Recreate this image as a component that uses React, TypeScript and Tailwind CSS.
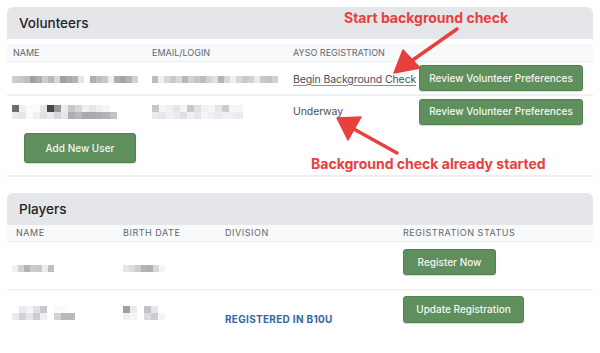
import React from "react";

const shade = (v: number) => `rgb(${v},${v},${v + 4})`;

function Pix({ rows, cell = 7, h = 7 }: { rows: number[][]; cell?: number; h?: number }) {
  return (
    <div className="flex flex-col">
      {rows.map((r, i) => (
        <div key={i} className="flex">
          {r.map((v, j) => (
            <div key={j} style={{ width: cell, height: h, background: v >= 255 ? "transparent" : shade(v) }} />
          ))}
        </div>
      ))}
    </div>
  );
}

function Btn({ children, w }: { children: React.ReactNode; w: string }) {
  return (
    <div
      className={`${w} flex items-center justify-center whitespace-nowrap rounded-[3px] bg-[#5f8f5c] border border-[#55834f] text-[10px] font-medium text-[#f3f7f2] shadow-[0_1px_1px_rgba(0,0,0,0.15)]`}
    >
      {children}
    </div>
  );
}

export default function App() {
  return (
    <div className="relative w-[600px] h-[353px] overflow-hidden bg-white font-['Inter',sans-serif] text-[#2b2f36]">
      <div className="pl-[7px] pr-[7px] pt-[7px]">
        {/* Volunteers */}
        <div className="h-[32px] bg-[#e5e6ea] rounded-t-[6px] flex items-center pl-[12px] text-[13.5px] font-medium text-[#1f2226]">
          Volunteers
        </div>
        <div className="h-[5px]" />
        <div className="h-[18px] bg-[#f8f9fb] flex items-center text-[9px] text-[#5f6670] border-b border-[#eceef2] whitespace-nowrap">
          <div className="w-[145px] pl-[6px]">NAME</div>
          <div className="w-[141px]">EMAIL/LOGIN</div>
          <div className="w-[126px]">AYSO REGISTRATION</div>
        </div>
        <div className="h-[34px] flex items-center border-b-2 border-[#f0f1f4]">
          <div className="w-[145px] pl-[5px] pt-[2px]">
            <Pix cell={6} rows={[[205, 200, 190, 160, 175, 205, 185, 215, 160, 170, 180, 230, 255, 175, 190, 200, 240, 175, 165, 180, 210]]} />
          </div>
          <div className="w-[141px] pt-[2px]">
            <Pix cell={6} rows={[[190, 240, 215, 200, 215, 185, 210, 200, 190, 210, 225, 180, 215, 240, 215, 200, 210, 235, 200, 195, 210]]} />
          </div>
          <div className="w-[126px] pt-[3px] whitespace-nowrap text-[10.5px] tracking-[-0.01em] text-[#4a4f57] underline underline-offset-2 decoration-[#8a8f97]">
            Begin Background Check
          </div>
          <Btn w="w-[164px] h-[26px]">Review Volunteer Preferences</Btn>
        </div>
        <div className="h-[31px] flex items-center">
          <div className="w-[145px] pl-[5px]">
            <Pix
              cell={7}
              h={7}
              rows={[
                [110, 240, 250, 250, 230, 70, 150, 235, 200, 215, 240, 230, 240, 245, 255, 255, 255, 255],
                [235, 230, 250, 240, 225, 235, 215, 230, 175, 185, 170, 170, 175, 180, 195, 255, 255, 255],
              ]}
            />
          </div>
          <div className="w-[141px]">
            <Pix
              cell={7}
              h={7}
              rows={[
                [200, 245, 240, 230, 245, 200, 225, 240, 245, 230, 205, 245, 245, 255, 255, 255],
                [235, 230, 240, 235, 225, 240, 230, 245, 240, 235, 240, 240, 235, 255, 255, 255],
              ]}
            />
          </div>
          <div className="w-[126px] text-[10.5px] tracking-[-0.01em] text-[#4a4f57]">Underway</div>
          <Btn w="w-[164px] h-[26px]">Review Volunteer Preferences</Btn>
        </div>
        <div className="pl-[17px] pt-[6px] pb-[12px] border-b-2 border-[#eceef1]">
          <Btn w="w-[112px] h-[30px]">Add New User</Btn>
        </div>

        {/* Players */}
        <div className="mt-[16px] h-[32px] bg-[#e5e6ea] rounded-t-[6px] flex items-center pl-[12px] text-[13.5px] font-medium text-[#1f2226]">
          Players
        </div>
        <div className="h-[17px] bg-[#f8f9fb] flex items-center text-[9px] tracking-[0.06em] text-[#5f6670] border-b border-[#eceef2] whitespace-nowrap">
          <div className="w-[116px] pl-[9px]">NAME</div>
          <div className="w-[102px]">BIRTH DATE</div>
          <div className="w-[178px]">DIVISION</div>
          <div>REGISTRATION STATUS</div>
        </div>
        <div className="h-[49px] flex items-start border-b-2 border-[#f0f1f4]">
          <div className="w-[116px] pl-[5px] pt-[23px]">
            <Pix cell={6} h={7} rows={[[240, 210, 180, 205, 200, 235, 190, 255]]} />
          </div>
          <div className="w-[102px] pt-[23px]">
            <Pix cell={6} h={7} rows={[[230, 220, 205, 180, 175, 215, 245]]} />
          </div>
          <div className="w-[178px]" />
          <div className="pt-[7px]">
            <Btn w="w-[93px] h-[26px]">Register Now</Btn>
          </div>
        </div>
        <div className="h-[50px] flex items-start">
          <div className="w-[116px] pl-[5px] pt-[15px]">
            <Pix
              cell={7}
              h={7}
              rows={[
                [255, 235, 245, 225, 200, 255, 250, 250, 255],
                [235, 210, 230, 205, 240, 255, 210, 185, 185],
              ]}
            />
          </div>
          <div className="w-[102px] pt-[15px]">
            <Pix
              cell={7}
              h={7}
              rows={[
                [160, 235, 255, 195, 230, 255],
                [240, 245, 255, 220, 205, 245],
              ]}
            />
          </div>
          <div className="w-[178px] pt-[21px] whitespace-nowrap text-[10px] font-bold tracking-[0.03em] text-[#3566a1]">REGISTERED IN B10U</div>
          <div className="pt-[5px]">
            <Btn w="w-[121px] h-[27px]">Update Registration</Btn>
          </div>
        </div>
      </div>

      {/* Annotations */}
      <div className="absolute left-[344px] top-[8px] whitespace-nowrap text-[14px] font-bold text-[#e8403d] leading-[20px]">
        Start background check
      </div>
      <div className="absolute left-[311px] top-[154px] whitespace-nowrap text-[14px] font-bold text-[#e8403d] leading-[20px]">
        Background check already started
      </div>
      <svg className="absolute left-0 top-0" width="600" height="353" viewBox="0 0 600 353">
        <g fill="#e8403d" stroke="#e8403d" strokeLinecap="round" strokeLinejoin="round">
          <line x1="457" y1="29" x2="410" y2="62" strokeWidth="3.5" />
          <polygon points="394,73 403,50 420,68" strokeWidth="1.5" />
          <line x1="397" y1="153" x2="352" y2="128" strokeWidth="3.5" />
          <polygon points="337,118 361,117 348,140" strokeWidth="1.5" />
        </g>
      </svg>
    </div>
  );
}
